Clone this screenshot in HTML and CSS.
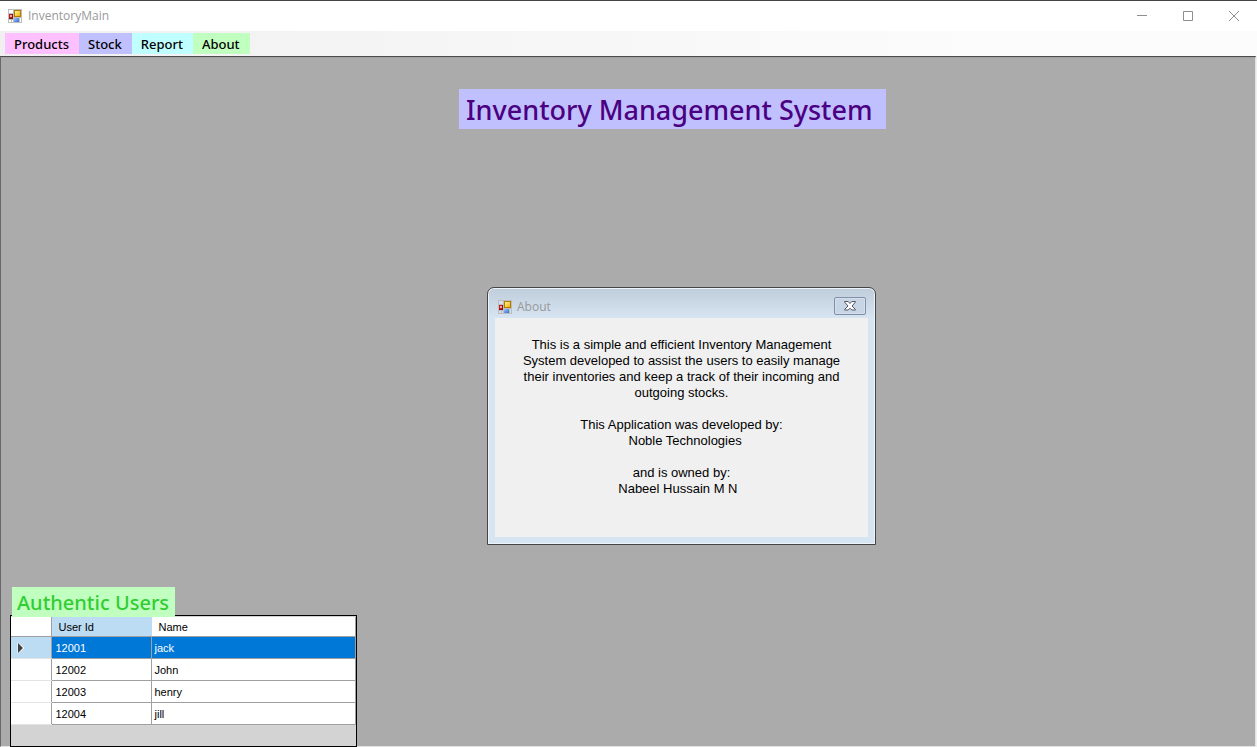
FILE: index.html
```html
<!DOCTYPE html>
<html lang="en">
<head>
<meta charset="utf-8">
<title>InventoryMain</title>
<link rel="stylesheet" href="styles.css">
</head>
<body>
<svg class="defs" aria-hidden="true">
  <defs>
    <linearGradient id="gold" x1="0" y1="0" x2="1" y2="1"><stop offset="0" stop-color="#fff0a0"/><stop offset="1" stop-color="#f0b400"/></linearGradient>
    <linearGradient id="blue" x1="0" y1="0" x2="1" y2="1"><stop offset="0" stop-color="#9cc4fa"/><stop offset="1" stop-color="#2f6fd8"/></linearGradient>
    <symbol id="form-icon" viewBox="0 0 14 14">
      <path class="icon-frame" fill="#bdbdbd" d="M0 0h14v14H0z"/>
      <path class="icon-pane" d="M1 1h4v3H1zM1 11h2v2H1zM4 11h1v2H4zM12 9h1v4h-1z"/>
      <path fill="#8d1010" d="M1 5h4v5H1z"/>
      <path fill="#c41c1c" d="M1 5h3v4H1z"/>
      <path fill="#f3a5a5" d="M2 6h2v2H2z"/>
      <path fill="#b07c00" d="M6 1h7v7H6z"/>
      <path fill="url(#gold)" d="M7 2h5v5H7z"/>
      <path fill="url(#blue)" d="M6 9h5v4H6z"/>
    </symbol>
  </defs>
</svg>
<div class="app">
  <header class="titlebar">
    <svg class="form-icon"><use href="#form-icon"/></svg>
    <span class="titlebar-text">InventoryMain</span>
    <div class="window-controls">
      <button class="window-button" aria-label="Minimize"><svg width="10" height="10" viewBox="0 0 10 10"><path d="M0 4.500h10"/></svg></button>
      <button class="window-button" aria-label="Maximize"><svg width="10" height="10" viewBox="0 0 10 10"><path d="M.5.5h9v9h-9z"/></svg></button>
      <button class="window-button" aria-label="Close"><svg width="10" height="10" viewBox="0 0 10 10"><path d="M0 0l10 10M10 0L0 10"/></svg></button>
    </div>
  </header>
  <nav class="menu">
    <button class="menu-item products">Products</button>
    <button class="menu-item stock">Stock</button>
    <button class="menu-item report">Report</button>
    <button class="menu-item about">About</button>
  </nav>
  <main class="workspace">
    <h1 class="heading">Inventory Management System</h1>
    <section class="users">
      <h2 class="users-title">Authentic Users</h2>
      <div class="grid">
        <table>
          <colgroup><col class="col-marker"><col class="col-id"><col></colgroup>
          <thead><tr><td></td><th class="current" scope="col">User Id</th><th scope="col">Name</th></tr></thead>
          <tbody>
            <tr class="selected"><td class="marker"><svg width="8" height="12" viewBox="0 0 8 12"><path class="arrow-edge" d="M1 1v10l6-5z"/><path d="M1 1v10l5-5z"/></svg></td><td>12001</td><td>jack</td></tr>
            <tr><td class="marker"></td><td>12002</td><td>John</td></tr>
            <tr><td class="marker"></td><td>12003</td><td>henry</td></tr>
            <tr><td class="marker"></td><td>12004</td><td>jill</td></tr>
          </tbody>
        </table>
      </div>
    </section>
    <section class="dialog" role="dialog" aria-labelledby="dialog-title">
      <header class="dialog-bar">
        <svg class="form-icon"><use href="#form-icon"/></svg>
        <span class="titlebar-text" id="dialog-title">About</span>
        <button class="dialog-close" aria-label="Close"><svg width="12" height="10" viewBox="0 0 12 10"><path class="x-shape" d="M.5 1V.5h3.700L6 2.500 7.800.5h3.700V1L8 5l3.500 3.500v.5H7.800L6 7.200 4.200 9H.5v-.5L4 5z"/></svg></button>
      </header>
      <div class="dialog-body">
        <p>This is a simple and efficient Inventory Management<br>System developed to assist the users to easily manage<br>their inventories and keep a track of their incoming and<br>outgoing stocks.</p>
        <p>This Application was developed by:<br>&nbsp;&nbsp;Noble Technologies</p>
        <p>and is owned by:<br>Nabeel Hussain M N&nbsp;&nbsp;</p>
      </div>
    </section>
  </main>
</div>
</body>
</html>
```

FILE: styles.css
```css
* { box-sizing: border-box; }
body { margin: 0; font-family: "Liberation Sans", Arial, sans-serif; color: #000; }
button { border: 0; padding: 0; background: none; color: inherit; font: inherit; }
.defs { position: absolute; width: 0; height: 0; }
.app { display: flex; flex-direction: column; min-height: 100vh; background: #f0f0f0; border-top: 1px solid #434343; }

.titlebar { display: flex; align-items: center; height: 30px; padding-left: 8px; background: #fff; }
.form-icon { width: 14px; height: 14px; flex: none; }
.icon-pane { fill: var(--pane, #fff); }
.titlebar-text { margin-left: 6px; font: 12px/16px "Open Sans", sans-serif; color: #999; }
.window-controls { display: flex; height: 100%; margin-left: auto; }
.window-button { display: grid; place-items: center; width: 46px; }
.window-button svg { fill: none; stroke: #8e8e8e; }

.menu { display: flex; height: 25px; padding: 2px 5px; background: linear-gradient(90deg, #f0f0f0, #fcfcfc 80%); }
.menu-item { padding: 1px 10px 0 9px; font: 500 13px/20px "Noto Sans", sans-serif; }
.products { background: #ffc0ff; }
.stock { background: #c0c0ff; }
.report { background: #c0ffff; }
.about { background: #c0ffc0; }

.workspace { position: relative; flex: 1; display: flex; flex-direction: column; align-items: flex-start; margin-right: 1px; padding: 31px 9px 0; background: #ababab; border: 1px solid #e3e3e3; border-top: 2px groove #a0a0a0; border-left-color: #696969; }
.heading { margin: 0 0 0 449px; padding: 2px 13px 0 7px; background: #c0c0ff; color: #4b0082; font: 500 27px/38px "Noto Sans", sans-serif; white-space: nowrap; }

.users { position: relative; width: 347px; margin: auto 0 -1px; }
.users-title { position: relative; width: fit-content; margin: 0 0 -2px 2px; padding: 2px 6px 0 5px; background: #c0ffc0; color: #32cd32; font: 500 20px/28px "Noto Sans", sans-serif; white-space: nowrap; }
.grid { padding: 1px 0 21px; border: 1px solid #000; background: #d3d3d3; }
.grid table { width: 100%; border-collapse: collapse; table-layout: fixed; font-size: 11px; background: #fff; }
.col-marker { width: 40px; }
.col-id { width: 100px; }
.grid th, .grid td { height: 22px; padding: 0 4px; border: solid #a0a0a0; border-width: 0 1px 1px 0; text-align: left; font-weight: 400; }
.grid thead td, .grid th { height: 20px; }
.grid th { padding: 2px 0 0 7px; }
.grid th.current { background: #bcdcf4; border-right-color: #bcdcf4; }
.grid td:last-child { padding-left: 3px; }
.grid .marker { padding-left: 6px; border-bottom-color: #e3e3e3; }
.marker svg { display: block; fill: #404040; }
.arrow-edge { fill: #fff; stroke: #fff; }
.selected td { background: #0078d7; color: #fff; }
.selected .marker { background: #bcdcf4; }

.dialog { --pane: #d3dfeb; position: absolute; left: 486px; top: 229px; width: 389px; padding: 1px 7px 7px; background: linear-gradient(#bfcddb, #d7e4f2 30px); border: 1px solid #454545; border-radius: 7px 7px 0 0; box-shadow: inset 0 0 0 1px #edf3fa; }
.dialog-bar { display: flex; align-items: center; height: 29px; padding: 6px 2px 0 3px; }
.dialog-bar .titlebar-text { margin-left: 5px; }
.dialog-close { display: grid; place-items: center; width: 32px; height: 18px; margin: 0 0 1px auto; border: 1px solid #838fa9; border-radius: 2px; background: #c7d5e4; box-shadow: inset 0 0 0 1px #d3dfec; }
.x-shape { fill: #fff; stroke: #535666; }
.dialog-body { min-height: 219px; padding-top: 19px; background: #f0f0f0; font-size: 13px; line-height: 16px; text-align: center; white-space: nowrap; }
.dialog-body p { margin: 0 0 16px; }
```
